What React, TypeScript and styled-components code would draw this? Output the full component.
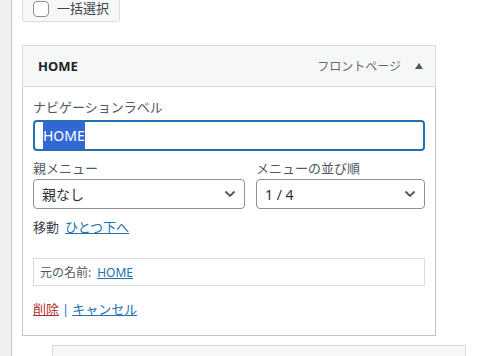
import React from 'react';
import styled, { createGlobalStyle } from 'styled-components';

const GlobalStyle = createGlobalStyle`
  html, body {
    margin: 0;
    padding: 0;
    background: #fff;
    overflow: hidden;
  }
  body {
    font-family: "Noto Sans", "Noto Sans CJK JP", sans-serif;
    font-size: 13px;
    color: #1d2327;
  }
`;

const Page = styled.div`
  display: flex;
  min-height: 356px;
`;

const AdminEdge = styled.div`
  width: 11px;
  flex: none;
  background: #f0f0f1;
  border-right: 1px solid #c3c4c7;
`;

const Main = styled.div`
  flex: 1;
  padding-left: 10px;
  display: flex;
  flex-direction: column;
  align-items: flex-start;

  & > * {
    flex-shrink: 0;
  }
`;

const BulkButton = styled.label`
  display: flex;
  align-items: center;
  gap: 8px;
  margin-top: -5px;
  height: 25px;
  padding: 0 10px;
  background: #f6f7f7;
  border: 1px solid #dcdcde;
  border-radius: 3px;
  color: #3c434a;
  font-size: 13px;
  line-height: 1;
`;

const CheckBox = styled.span`
  width: 14px;
  height: 14px;
  border: 1px solid #8c8f94;
  border-radius: 4px;
  background: #fff;
`;

const MenuItem = styled.div`
  width: 414px;
  box-sizing: border-box;
  margin-top: 23px;
`;

const ItemHead = styled.div`
  height: 42px;
  box-sizing: border-box;
  display: flex;
  align-items: center;
  justify-content: space-between;
  padding: 0 12px 0 15px;
  background: #f6f7f7;
  border: 1px solid #dcdcde;
`;

const ItemTitle = styled.span`
  font-weight: 700;
  font-size: 13px;
  color: #1d2327;
`;

const ItemControls = styled.span`
  display: flex;
  align-items: center;
  gap: 14px;
  color: #646970;
  font-size: 12px;
`;

const ItemBody = styled.div`
  border: 1px solid #c3c4c7;
  border-top: none;
  padding: 10px 10px 16px;
`;

const FieldLabel = styled.div`
  color: #50575e;
  font-size: 13px;
  line-height: 20px;
  margin-bottom: 3px;
`;

const TextInput = styled.div`
  height: 31px;
  box-sizing: border-box;
  border: 2px solid #2271b1;
  border-radius: 4px;
  display: flex;
  align-items: stretch;
  padding-left: 8px;
  font-size: 14px;
  margin-bottom: 7px;
`;

const Selected = styled.span`
  display: flex;
  align-items: center;
  background: #3367d6;
  color: #fff;
`;

const Row = styled.div`
  display: grid;
  grid-template-columns: 212px 169px;
  column-gap: 11px;
`;

const Field = styled.div``;

const SelectBox = styled.div`
  height: 30px;
  box-sizing: border-box;
  border: 1px solid #8c8f94;
  border-radius: 4px;
  display: flex;
  align-items: center;
  justify-content: space-between;
  padding: 0 8px;
  font-size: 14px;
  color: #2c3338;
  background: #fff;
  margin-top: -2px;
`;

const MoveRow = styled.div`
  margin-top: 8px;
  display: flex;
  gap: 6px;
  line-height: 20px;
  color: #3c434a;
`;

const Link = styled.a<{ $danger?: boolean }>`
  color: ${(p) => (p.$danger ? '#b32d2e' : '#2271b1')};
  text-decoration: underline;
  cursor: pointer;
`;

const Original = styled.div`
  margin-top: 21px;
  height: 28px;
  box-sizing: border-box;
  border: 1px solid #dcdcde;
  display: flex;
  align-items: center;
  gap: 6px;
  padding-left: 6px;
  font-size: 12px;
  color: #50575e;
`;

const Actions = styled.div`
  margin-top: 13px;
  line-height: 20px;
  color: #2271b1;
  display: flex;
  gap: 3px;
`;

const NextItem = styled.div`
  margin-top: 9px;
  margin-left: 30px;
  width: 414px;
  height: 40px;
  box-sizing: border-box;
  background: #f6f7f7;
  border: 1px solid #dcdcde;
`;

const Chevron = () => (
  <svg width="12" height="8" viewBox="0 0 12 8">
    <path d="M1.5 1.5 L6 6 L10.5 1.5" fill="none" stroke="#50575e" strokeWidth="1.8" />
  </svg>
);

const UpArrow = () => (
  <svg width="8" height="6" viewBox="0 0 8 6">
    <path d="M4 0 L8 6 L0 6 Z" fill="#50575e" />
  </svg>
);

export default function App() {
  return (
    <>
      <GlobalStyle />
      <Page>
        <AdminEdge />
        <Main>
          <BulkButton>
            <CheckBox />
            一括選択
          </BulkButton>

          <MenuItem>
            <ItemHead>
              <ItemTitle>HOME</ItemTitle>
              <ItemControls>
                フロントページ
                <UpArrow />
              </ItemControls>
            </ItemHead>
            <ItemBody>
              <FieldLabel>ナビゲーションラベル</FieldLabel>
              <TextInput>
                <Selected>HOME</Selected>
              </TextInput>
              <Row>
                <Field>
                  <FieldLabel>親メニュー</FieldLabel>
                  <SelectBox>
                    親なし
                    <Chevron />
                  </SelectBox>
                </Field>
                <Field>
                  <FieldLabel>メニューの並び順</FieldLabel>
                  <SelectBox>
                    1 / 4
                    <Chevron />
                  </SelectBox>
                </Field>
              </Row>
              <MoveRow>
                移動
                <Link>ひとつ下へ</Link>
              </MoveRow>
              <Original>
                元の名前:
                <Link>HOME</Link>
              </Original>
              <Actions>
                <Link $danger>削除</Link>
                <span>|</span>
                <Link>キャンセル</Link>
              </Actions>
            </ItemBody>
          </MenuItem>

          <NextItem />
        </Main>
      </Page>
    </>
  );
}
